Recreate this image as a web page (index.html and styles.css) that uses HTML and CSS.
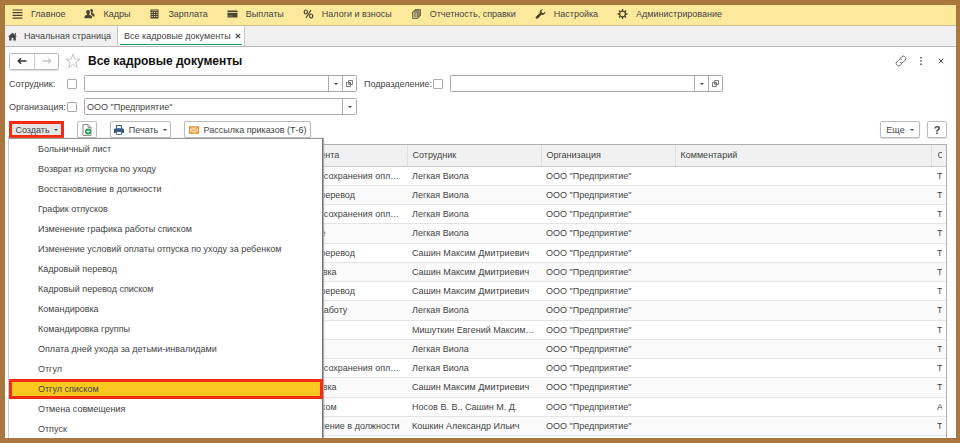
FILE: index.html
```html
<!DOCTYPE html>
<html lang="ru">
<head>
<meta charset="utf-8">
<title>Все кадровые документы</title>
<link rel="stylesheet" href="styles.css">
</head>
<body>
<div class="window">
  <nav class="sections">
    <a href="#"><svg viewBox="0 0 10 10"><path d="M0 1h10M0 3.7h10M0 6.4h10M0 9.1h10" stroke="#4a4533" stroke-width="1.2"/></svg>Главное</a>
    <a href="#"><svg viewBox="0 0 10 10" fill="#4a4533"><path d="M3.5 1a2 2 0 0 1 2 2.2c0 .9-.4 1.500-.8 1.900v.6l2 .9c.6.3.8.8.8 1.400v1.200H0V8c0-.6.3-1.100.800-1.400l1.700-.9v-.6c-.5-.5-.9-1.100-.9-1.900A2 2 0 0 1 3.500 1z"/><path d="M6.800 0a1.700 1.700 0 0 1 1.700 1.900c0 .7-.3 1.200-.6 1.500v.6l1.400.7c.5.300.7.700.7 1.200v1.500H8.200c0-1-.5-1.500-1.900-2.100.4-.9.5-3-.7-4.100C5.800.4 6.200 0 6.800 0z"/></svg>Кадры</a>
    <a href="#"><svg viewBox="0 0 10 10"><path d="M1 .5h8v9H1z" fill="#4a4533"/><path d="M2 3.500h6M2 5.500h6M2 7.500h6" stroke="#fce99c" stroke-width="1.100" stroke-dasharray="1.200 1.200"/><path d="M2 1.700h6" stroke="#fce99c" stroke-width=".6"/></svg>Зарплата</a>
    <a href="#"><svg viewBox="0 0 10 10"><path d="M0 1.500h10v7H0z" fill="#4a4533"/><path d="M0 3.500h10" stroke="#fce99c" stroke-width=".8"/><path d="M1 7h4" stroke="#a89d6d" stroke-width=".8"/></svg>Выплаты</a>
    <a href="#"><svg viewBox="0 0 10 10" fill="none" stroke="#4a4533" stroke-width="1.200"><ellipse cx="2.300" cy="3" rx="1.600" ry="2"/><ellipse cx="7.700" cy="7" rx="1.600" ry="2"/><path d="M7.500 1l-5 8"/></svg>Налоги и взносы</a>
    <a href="#"><svg viewBox="0 0 10 10" fill="#c9bd84" stroke="#5c563f" stroke-width=".8"><path d="M3.500.5h5.500v6.500H3.500z"/><path d="M2.300 1.700h5.400v6.500H2.300z"/><path d="M1 3h5.300v6.500H1z"/><path d="M2.300 5h2.500M2.300 7h2.500"/></svg>Отчетность, справки</a>
    <a href="#"><svg viewBox="0 0 10 10"><path d="M9.800 2.600A3 3 0 0 1 6 5.800L2.400 9.400A1.200 1.200 0 0 1 .6 7.600L4.300 4A3 3 0 0 1 7.500.2L5.900 1.900 6.300 3.700 8.100 4.100z" fill="#4a4533"/></svg>Настройка</a>
    <a href="#"><svg viewBox="0 0 10 10" fill="none" stroke="#4a4533"><circle cx="5" cy="5" r="2.900" stroke-width="1.300"/><path d="M5 0v2M5 8v2M0 5h2M8 5h2M1.500 1.500l1.300 1.300M7.200 7.200l1.300 1.300M8.500 1.500L7.200 2.800M2.800 7.200L1.500 8.500" stroke-width="1.300"/></svg>Администрирование</a>
  </nav>

  <div class="tabs">
    <a class="tab" href="#"><svg class="home" viewBox="0 0 10 10"><path d="M5 .8L10 5H8.700v4.500H6V6.500H4v3H1.300V5H0z" fill="#444"/><path d="M7.600 1h1.200v2.500l-1.200-1z" fill="#444"/></svg>Начальная страница</a>
    <a class="tab active" href="#"><span class="tab-title">Все кадровые документы<svg class="tab-close" viewBox="0 0 6 6"><path d="M.8.8l4.400 4.400M5.200.8L.8 5.200" stroke="#444" stroke-width="1.200"/></svg></span></a>
  </div>

  <main class="page">
    <header class="title-row">
      <div class="history">
        <button type="button" aria-label="Назад"><svg viewBox="0 0 10 8" fill="none" stroke="#333" stroke-width="1.500"><path d="M9.500 4H1.500M4 1.300L1.300 4 4 6.700"/></svg></button>
        <button type="button" aria-label="Вперед"><svg viewBox="0 0 10 8" fill="none" stroke="#aaa"><path d="M.5 4h8M6 1.300L8.700 4 6 6.700"/></svg></button>
      </div>
      <svg class="star" viewBox="0 0 16 16"><path d="M8 1.200l1.800 4.900 5.300.2-4.200 3.200 1.500 5L8 11.600l-4.400 2.900 1.500-5L.9 6.300l5.300-.2z" fill="#fff" stroke="#bbb" stroke-width=".9"/></svg>
      <h1>Все кадровые документы</h1>
      <div class="window-tools">
        <button type="button" aria-label="Ссылка"><svg viewBox="0 0 12 12" fill="none" stroke="#666"><path d="M5 3.500l1.800-1.800a2 2 0 0 1 2.900 0l.5.500a2 2 0 0 1 0 2.900L8 7.300a2 2 0 0 1-2.800 0M7 8.500l-1.800 1.800a2 2 0 0 1-2.900 0l-.5-.5a2 2 0 0 1 0-2.900L4 4.700a2 2 0 0 1 2.800 0"/></svg></button>
        <button type="button" aria-label="Действия"><svg viewBox="0 0 12 12" fill="#555"><path d="M5.200 2h1.600v1.600H5.200zM5.200 5.200h1.600v1.600H5.200zM5.200 8.400h1.600V10H5.200z"/></svg></button>
        <button type="button" aria-label="Закрыть"><svg viewBox="0 0 12 12"><path d="M3.700 3.700l4.600 4.600M8.300 3.700L3.700 8.300" stroke="#555"/></svg></button>
      </div>
    </header>

    <form class="filters">
      <label for="employee">Сотрудник:</label>
      <input type="checkbox" aria-label="Отбор по сотруднику">
      <div class="combo">
        <input id="employee" type="text">
        <button type="button" aria-label="Выбрать"><i class="caret"></i></button>
        <button type="button" aria-label="Открыть"><svg viewBox="0 0 8 8" fill="#fff" stroke="#666"><path d="M3 .5h4.500V5H3z"/><path d="M.5 3H5v4.500H.5z"/><path d="M3 3h2v2H3z" fill="none"/></svg></button>
      </div>
      <label class="second" for="department">Подразделение:</label>
      <input type="checkbox" aria-label="Отбор по подразделению">
      <div class="combo">
        <input id="department" type="text">
        <button type="button" aria-label="Выбрать"><i class="caret"></i></button>
        <button type="button" aria-label="Открыть"><svg viewBox="0 0 8 8" fill="#fff" stroke="#666"><path d="M3 .5h4.500V5H3z"/><path d="M.5 3H5v4.500H.5z"/><path d="M3 3h2v2H3z" fill="none"/></svg></button>
      </div>
      <label class="row-start" for="company">Организация:</label>
      <input type="checkbox" aria-label="Отбор по организации">
      <div class="combo">
        <input id="company" type="text" value="ООО &quot;Предприятие&quot;">
        <button type="button" aria-label="Выбрать"><i class="caret"></i></button>
      </div>
    </form>

    <div class="toolbar">
      <div class="create">
        <button type="button" class="btn create-btn">Создать<i class="caret"></i></button>
        <ul class="menu">
          <li><a href="#">Больничный лист</a></li>
          <li><a href="#">Возврат из отпуска по уходу</a></li>
          <li><a href="#">Восстановление в должности</a></li>
          <li><a href="#">График отпусков</a></li>
          <li><a href="#">Изменение графика работы списком</a></li>
          <li><a href="#">Изменение условий оплаты отпуска по уходу за ребенком</a></li>
          <li><a href="#">Кадровый перевод</a></li>
          <li><a href="#">Кадровый перевод списком</a></li>
          <li><a href="#">Командировка</a></li>
          <li><a href="#">Командировка группы</a></li>
          <li><a href="#">Оплата дней ухода за детьми-инвалидами</a></li>
          <li><a href="#">Отгул</a></li>
          <li class="current"><a href="#">Отгул списком</a></li>
          <li><a href="#">Отмена совмещения</a></li>
          <li><a href="#">Отпуск</a></li>
        </ul>
      </div>
      <button type="button" class="btn copy-btn" aria-label="Создать копированием"><svg viewBox="0 0 10 12"><path d="M1 .6h5l3 3v7.800H1z" fill="#fff" stroke="#777" stroke-width=".9"/><path d="M6 .6v3h3" fill="none" stroke="#777" stroke-width=".8"/><circle cx="6" cy="7.500" r="3" fill="#159a45"/><path d="M6 5.800v3.400M4.300 7.500h3.400" stroke="#fff"/></svg></button>
      <button type="button" class="btn print-btn"><svg viewBox="0 0 10 10"><path d="M2.500.5h5V4h-5z" fill="#fff" stroke="#365a80"/><path d="M.8 3.500h8.400l.8.800V8H0V4.300z" fill="#365a80"/><path d="M2.500 6.500h5v3h-5z" fill="#fff" stroke="#365a80" stroke-width=".8"/></svg>Печать<i class="caret"></i></button>
      <button type="button" class="btn mail-btn"><svg viewBox="0 0 10 10"><path d="M.6 1.800h8.800v6.400H.6z" fill="#fbe0ae" stroke="#de8f2d" stroke-width="1.200"/><path d="M1 2.200l4 3.300 4-3.300M1 8l2.800-3M9 8L6.200 5" fill="none" stroke="#de8f2d" stroke-width=".8"/></svg>Рассылка приказов (Т-6)</button>
      <button type="button" class="btn more-btn">Еще<i class="caret"></i></button>
      <button type="button" class="btn help-btn">?</button>
    </div>

    <div class="list">
      <table>
        <colgroup><col class="c-date"><col class="c-kind"><col class="c-emp"><col class="c-org"><col><col class="c-last"></colgroup>
        <thead><tr><th></th><th>Вид документа</th><th>Сотрудник</th><th>Организация</th><th>Комментарий</th><th><span>О</span></th></tr></thead>
        <tbody>
          <tr><td></td><td>Отпуск без сохранения оплаты</td><td>Легкая Виола</td><td>ООО "Предприятие"</td><td></td><td><span>Т</span></td></tr>
          <tr><td></td><td>Кадровый перевод</td><td>Легкая Виола</td><td>ООО "Предприятие"</td><td></td><td><span>Т</span></td></tr>
          <tr><td></td><td>Отпуск без сохранения оплаты</td><td>Легкая Виола</td><td>ООО "Предприятие"</td><td></td><td><span>Т</span></td></tr>
          <tr><td></td><td>Увольнение</td><td>Легкая Виола</td><td>ООО "Предприятие"</td><td></td><td><span>Т</span></td></tr>
          <tr><td></td><td>Кадровый перевод</td><td>Сашин Максим Дмитриевич</td><td>ООО "Предприятие"</td><td></td><td><span>Т</span></td></tr>
          <tr><td></td><td>Командировка</td><td>Сашин Максим Дмитриевич</td><td>ООО "Предприятие"</td><td></td><td><span>Т</span></td></tr>
          <tr><td></td><td>Кадровый перевод</td><td>Сашин Максим Дмитриевич</td><td>ООО "Предприятие"</td><td></td><td><span>Т</span></td></tr>
          <tr><td></td><td>Прием на работу</td><td>Легкая Виола</td><td>ООО "Предприятие"</td><td></td><td><span>Т</span></td></tr>
          <tr><td></td><td>Отпуск</td><td>Мишуткин Евгений Максимович</td><td>ООО "Предприятие"</td><td></td><td><span>Т</span></td></tr>
          <tr><td></td><td>Отгул</td><td>Легкая Виола</td><td>ООО "Предприятие"</td><td></td><td><span>Т</span></td></tr>
          <tr><td></td><td>Отпуск без сохранения оплаты</td><td>Легкая Виола</td><td>ООО "Предприятие"</td><td></td><td><span>Т</span></td></tr>
          <tr><td></td><td>Командировка</td><td>Сашин Максим Дмитриевич</td><td>ООО "Предприятие"</td><td></td><td><span>Т</span></td></tr>
          <tr><td></td><td>Отгул списком</td><td>Носов В. В., Сашин М. Д.</td><td>ООО "Предприятие"</td><td></td><td><span>А</span></td></tr>
          <tr><td></td><td>Восстановление в должности</td><td>Кошкин Александр Ильич</td><td>ООО "Предприятие"</td><td></td><td><span>Т</span></td></tr>
        </tbody>
      </table>
    </div>
  </main>
</div>
</body>
</html>
```
FILE: styles.css
```css
* { box-sizing: border-box; }

body {
  margin: 0;
  font: 9px/12px "Liberation Sans", Arial, sans-serif;
  color: #444;
}

button, input { font: inherit; color: inherit; margin: 0; padding: 0; }
a { color: inherit; text-decoration: none; }
svg { display: block; flex: none; }

.window {
  display: flex;
  flex-direction: column;
  height: 100vh;
  border: 5px solid #aa783e;
  border-right-width: 4px;
  background: #fff;
  overflow: hidden;
}

/* Section bar */
.sections {
  display: flex;
  flex: none;
  gap: 19px;
  height: 21px;
  padding: 0 7px;
  background: #fce99c;
  border-bottom: 1px solid #c9bf92;
}
.sections a { display: flex; align-items: center; gap: 8px; height: 18px; white-space: nowrap; }
.sections svg { width: 11px; height: 10px; }

/* Open windows */
.tabs {
  display: flex;
  flex: none;
  height: 21px;
  background: #f0f0f0;
  border-bottom: 1px solid #b8b8b8;
}
.tab { display: flex; align-items: center; padding: 0 6px 0 3px; white-space: nowrap; }
.home { width: 9px; height: 9px; margin-right: 7px; }
.tab.active {
  background: #fff;
  border: 1px solid #c4c4c4;
  border-width: 0 1px;
  padding: 0 2px;
}
.tab-title {
  display: flex;
  align-items: center;
  gap: 4px;
  height: 18px;
  padding: 1px 1px 0 4px;
  border-bottom: 1px solid #17a05a;
}
.tab-close { width: 6px; height: 6px; }

/* Page */
.page { display: flex; flex: 1; flex-direction: column; min-height: 0; padding: 5px 9px 0 4px; }

.title-row { display: flex; flex: none; align-items: center; height: 18px; }
.history {
  display: flex;
  border: 1px solid #b9b9b9;
  border-radius: 2px;
  box-shadow: 0 1px 1px #ddd;
}
.history button {
  display: grid;
  place-items: center;
  width: 24px;
  height: 15px;
  border: 0;
  background: #fff;
}
.history button + button { border-left: 1px solid #ccc; }
.history svg { width: 10px; height: 8px; }
.star { width: 16px; height: 16px; margin: 0 7px 0 6px; }
h1 { margin: 0; font-size: 12px; line-height: 18px; color: #111; }
.window-tools { display: flex; gap: 8px; margin-left: auto; }
.window-tools button { width: 12px; height: 12px; border: 0; background: none; }

/* Filters */
.filters {
  display: grid;
  grid-template-columns: 58px 17px 273px 76px 17px 273px;
  align-items: center;
  row-gap: 6px;
  padding-top: 5px;
}
.filters .second { padding-left: 7px; }
.row-start { grid-column: 1; }
.filters input[type="checkbox"] {
  appearance: none;
  width: 10px;
  height: 10px;
  border: 1px solid #a9a9a9;
  border-radius: 1px;
  background: #fff;
}
.combo { display: flex; height: 17px; border: 1px solid #aaa; border-radius: 2px; overflow: hidden; }
.combo input { flex: 1; min-width: 0; padding: 0 2px; border: 0; outline: 0; }
.combo button {
  display: grid;
  place-items: center;
  width: 14px;
  border: 0;
  border-left: 1px solid #aaa;
  background: #fff;
}
.combo svg { width: 7px; height: 7px; }

.caret {
  border: 2px solid transparent;
  border-top-color: #444;
  border-bottom: 0;
}

/* Commands */
.toolbar { display: flex; flex: none; gap: 13px; padding-top: 6px; height: 29px; align-items: flex-start; }
.btn {
  display: flex;
  align-items: center;
  justify-content: center;
  gap: 5px;
  height: 17px;
  padding: 0 5px;
  border: 1px solid #bbb;
  border-radius: 2px;
  background: #fff;
  box-shadow: 0 1px 1px #ddd;
  white-space: nowrap;
}
.btn svg { width: 10px; height: 10px; }
.create { position: relative; }
.create-btn {
  gap: 4px;
  width: 55px;
  border: 3px solid #f32b12;
  border-radius: 0;
  background: #e6e6e6;
  box-shadow: none;
  padding: 0;
}
.copy-btn { width: 20px; }
.copy-btn svg { height: 12px; }
.print-btn { width: 61px; }
.mail-btn { width: 127px; }
.more-btn { width: 40px; margin-left: auto; }
.help-btn { width: 20px; margin-left: -6px; font-weight: bold; font-size: 11px; }

.menu {
  position: absolute;
  z-index: 1;
  top: 17px;
  left: -1px;
  width: 315px;
  margin: 0;
  padding: 0;
  list-style: none;
  background: #fff;
  border: 1px solid #999;
  border-left-color: #ccc;
  border-right: 1px solid #777;
  box-shadow: 1px 0 1px #aaa;
}
.menu a { display: block; height: 20px; padding-left: 29px; line-height: 20px; }
.menu .current { margin-right: -1px; }
.menu .current a {
  padding-left: 26px;
  line-height: 14px;
  border: 3px solid #f32b12;
  background: #f9c71f;
}

/* Document list */
.list { flex: 1; min-height: 0; padding-bottom: 2px; border: 1px solid #b0b0b0; border-bottom: 0; }
table { width: 100%; height: 100%; table-layout: fixed; border-collapse: collapse; }
.c-date { width: 261px; }
.c-kind { width: 136px; }
.c-emp, .c-org { width: 134px; }
.c-last { width: 15px; }
th, td {
  padding: 0 5px;
  border-bottom: 1px solid #e4e4e4;
  text-align: left;
  font-weight: normal;
  white-space: nowrap;
  overflow: hidden;
  text-overflow: ellipsis;
}
th { height: 21px; background: #f1f1f1; border-left: 1px solid #ddd; border-bottom-color: #ccc; }
th:first-child { border-left: 0; }
tbody tr:nth-child(even) { background: #fafafa; }
th:last-child, td:last-child { padding: 0 4px 0 6px; }
th span, td span { display: block; overflow: hidden; }
```
